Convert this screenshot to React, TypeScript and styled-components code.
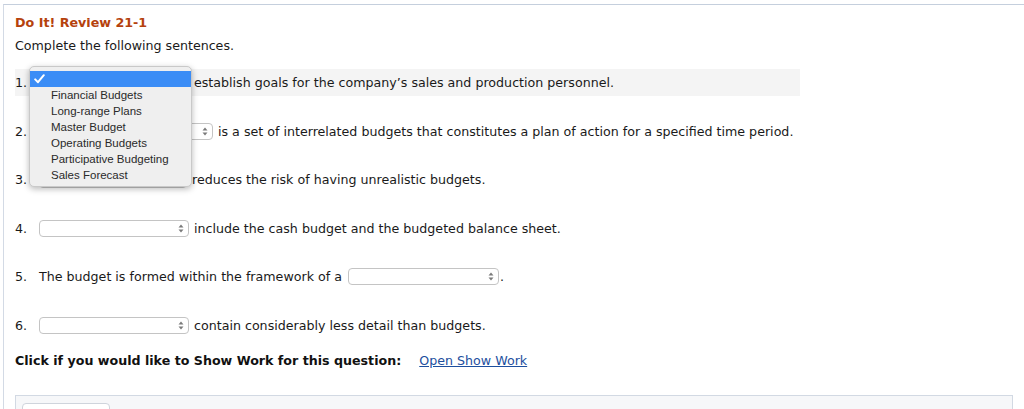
import * as React from 'react';
import styled, { createGlobalStyle } from 'styled-components';

const GlobalStyle = createGlobalStyle`
	html,
	body {
		margin: 0;
		padding: 0;
		background: #ffffff;
		overflow: hidden;
	}
`;

const options = [
	'Financial Budgets',
	'Long-range Plans',
	'Master Budget',
	'Operating Budgets',
	'Participative Budgeting',
	'Sales Forecast',
];

const Select: React.FunctionComponent<{ width: number; inline?: boolean }> = ({ width, inline }) => (
	<SelectBox width={width} inline={inline}>
		<svg width="6" height="9" viewBox="0 0 6 9">
			<path d="M3 0.5 L5.5 3.5 H0.5 Z" fill="#7a7a7a" />
			<path d="M3 8.5 L5.5 5.5 H0.5 Z" fill="#7a7a7a" />
		</svg>
	</SelectBox>
);

const App: React.FunctionComponent = () => {
	return (
		<>
			<GlobalStyle />
			<Panel>
				<Title>Do It! Review 21-1</Title>
				<Intro>Complete the following sentences.</Intro>
				<Questions>
					<Row active>
						<Num>1.</Num>
						<Select width={150} />
						<span>establish goals for the company’s sales and production personnel.</span>
						<Menu>
							<MenuItem selected>
								<svg width="11" height="10" viewBox="0 0 11 10">
									<path
										d="M1.2 5.4 L4 8.2 L9.8 1.2"
										fill="none"
										stroke="#ffffff"
										strokeWidth="2"
										strokeLinecap="round"
										strokeLinejoin="round"
									/>
								</svg>
							</MenuItem>
							{options.map(o => (
								<MenuItem key={o}>{o}</MenuItem>
							))}
						</Menu>
					</Row>
					<Row>
						<Num>2.</Num>
						<Select width={174} />
						<span>is a set of interrelated budgets that constitutes a plan of action for a specified time period.</span>
					</Row>
					<Row>
						<Num>3.</Num>
						<Select width={148} />
						<span>reduces the risk of having unrealistic budgets.</span>
					</Row>
					<Row>
						<Num>4.</Num>
						<Select width={150} />
						<span>include the cash budget and the budgeted balance sheet.</span>
					</Row>
					<Row>
						<Num>5.</Num>
						<span>The budget is formed within the framework of a</span>
						<Select width={151} inline />
						<Dot>.</Dot>
					</Row>
					<Row>
						<Num>6.</Num>
						<Select width={150} />
						<span>contain considerably less detail than budgets.</span>
					</Row>
				</Questions>
				<ShowWork>
					<strong>Click if you would like to Show Work for this question:</strong>
					<WorkLink href="#">Open Show Work</WorkLink>
				</ShowWork>
				<WorkPanel>
					<WorkButton />
				</WorkPanel>
			</Panel>
		</>
	);
};

export default App;

const Panel = styled.div`
	margin: 4px 0 0 3px;
	height: 405px;
	overflow: hidden;
	border-top: 1px solid #c5cfdd;
	border-left: 1px solid #d3dae5;
	padding: 10px 0 0 11px;
	box-sizing: border-box;
	font-family: 'DejaVu Sans', Verdana, sans-serif;
	font-size: 12.65px;
	color: #1a1a1a;
`;

const Title = styled.div`
	font-weight: bold;
	font-size: 12.7px;
	color: #b5420d;
	line-height: 15px;
`;

const Intro = styled.div`
	margin-top: 8px;
	line-height: 15px;
`;

const Questions = styled.div`
	margin-top: 16px;
	display: flex;
	flex-direction: column;
	gap: 21.5px;
`;

const Row = styled.div<{ active?: boolean }>`
	position: relative;
	width: 785px;
	height: 27px;
	display: flex;
	align-items: center;
	background: ${props => (props.active ? '#f4f4f4' : 'transparent')};
	white-space: nowrap;
`;

const Num = styled.div`
	width: 24px;
	flex: none;
`;

const Dot = styled.span`
	margin-left: 1px;
`;

const SelectBox = styled.div<{ width: number; inline?: boolean }>`
	width: ${props => props.width}px;
	height: 17px;
	box-sizing: border-box;
	border: 1px solid #c4c4c4;
	border-radius: 4px;
	background: #ffffff;
	display: flex;
	align-items: center;
	justify-content: flex-end;
	padding-right: 4px;
	margin: ${props => (props.inline ? '0 0 0 6px' : '0 5px 0 0')};
	flex: none;
`;

const Menu = styled.div`
	position: absolute;
	left: 14px;
	top: -3px;
	width: 163px;
	padding: 4px 0 3px;
	box-sizing: border-box;
	background: #efefef;
	border: 1px solid #c9c9c9;
	border-radius: 5px;
	box-shadow: 0 2px 6px rgba(0, 0, 0, 0.28);
	font-family: 'Liberation Sans', Arial, sans-serif;
	font-size: 11.5px;
	color: #2a2a2a;
	z-index: 2;
`;

const MenuItem = styled.div<{ selected?: boolean }>`
	height: 16px;
	line-height: 16px;
	padding-left: ${props => (props.selected ? '4px' : '21px')};
	display: flex;
	align-items: center;
	background: ${props => (props.selected ? '#3b8df6' : 'transparent')};
`;

const ShowWork = styled.div`
	margin-top: 14px;
	display: flex;
	align-items: center;
	gap: 18px;
	line-height: 15px;
	color: #111111;
`;

const WorkLink = styled.a`
	color: #1d4f9e;
	text-decoration: underline;
`;

const WorkPanel = styled.div`
	margin-top: 27px;
	width: 998px;
	height: 40px;
	box-sizing: border-box;
	border: 1px solid #d2d9e3;
	background: #f6f7f9;
	padding: 7px 0 0 6px;
`;

const WorkButton = styled.div`
	width: 86px;
	height: 26px;
	border: 1px solid #cfd4dc;
	border-radius: 4px;
	background: #ffffff;
`;
